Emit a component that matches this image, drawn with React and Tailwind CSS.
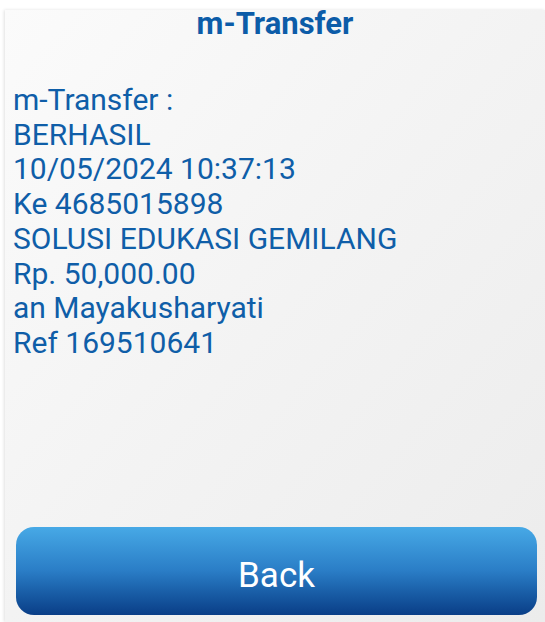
export default function App() {
  const lines = [
    'm-Transfer :',
    'BERHASIL',
    '10/05/2024 10:37:13',
    'Ke 4685015898',
    'SOLUSI EDUKASI GEMILANG',
    'Rp. 50,000.00',
    'an Mayakusharyati',
    'Ref 169510641',
  ];

  return (
    <div className="h-[622px] w-[545px] bg-white pt-[10px] pl-[5px] font-['Roboto',sans-serif] overflow-hidden">
      <div className="flex h-full flex-col bg-gradient-to-br from-[#fbfbfb] via-[#f3f3f3] to-[#ececec] shadow-[-1px_0_3px_rgba(0,0,0,0.12)]">
        {/* Title */}
        <h1 className="text-center text-[31px] font-bold leading-[28px] text-[#0c5ca8]">m-Transfer</h1>

        {/* Result */}
        <div className="mt-[45px] pl-[8px] text-[30px] leading-[34.7px] text-[#0f5ea8]">
          {lines.map((line, i) => (
            <div key={i}>{line}</div>
          ))}
        </div>

        <div className="flex-1" />

        {/* Back button */}
        <div className="pl-[11px] pr-[8px] pb-[7px]">
          <button className="flex h-[88px] w-full items-center justify-center rounded-[18px] bg-gradient-to-b from-[#47a9e6] via-[#2a7dc6] to-[#0a3e87] pt-[10px] text-[35px] text-white">
            Back
          </button>
        </div>
      </div>
    </div>
  );
}
